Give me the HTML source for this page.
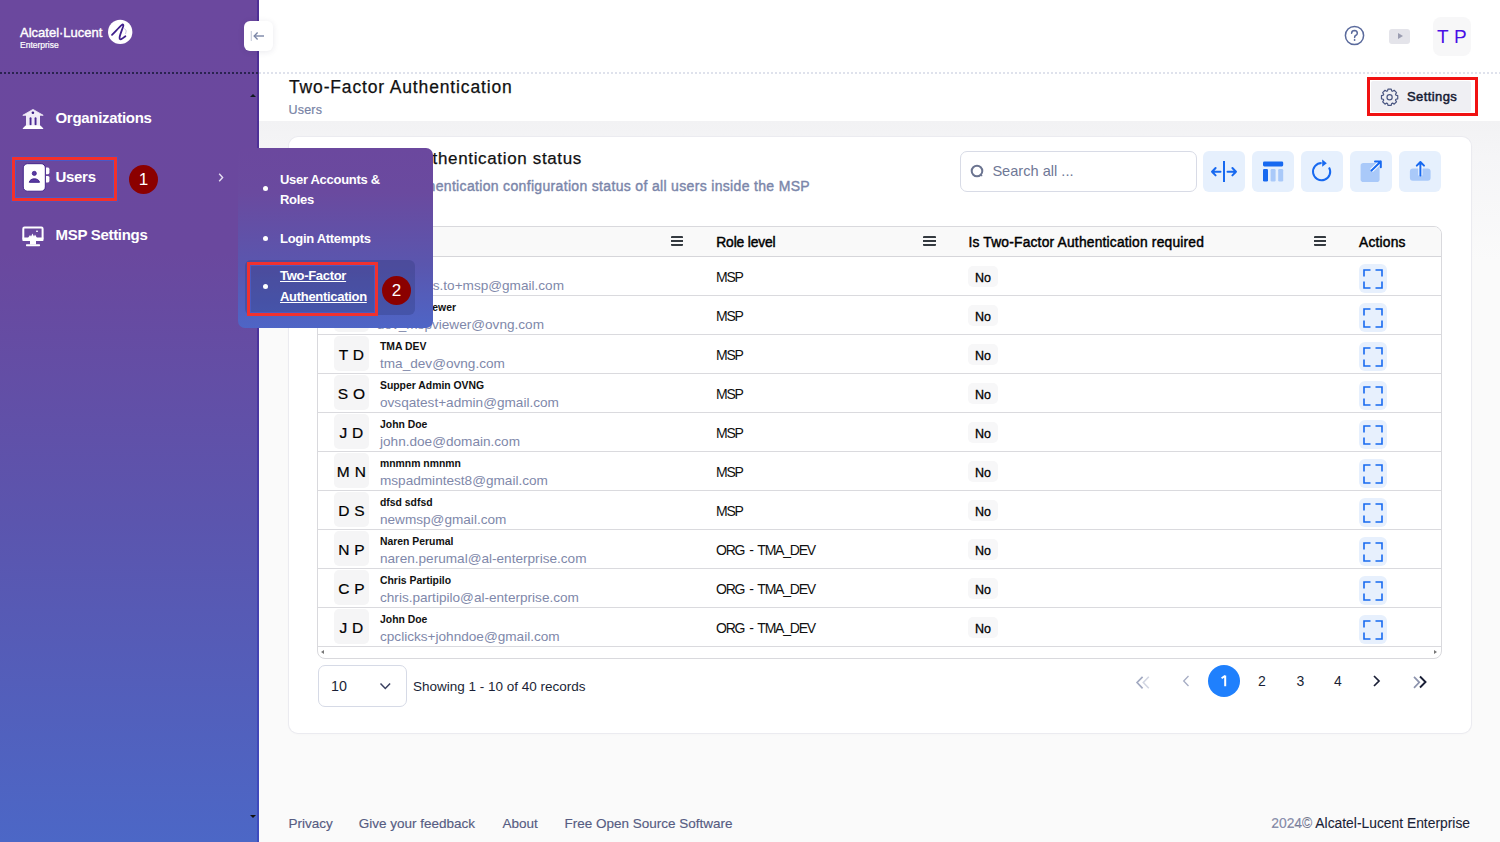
<!DOCTYPE html>
<html><head><meta charset="utf-8">
<style>
*{box-sizing:border-box;margin:0;padding:0}
html,body{width:1500px;height:842px;overflow:hidden}
body{position:relative;background:#fafafa;font-family:"Liberation Sans",sans-serif;color:#1a1f36}
.abs{position:absolute}
.t{position:absolute;white-space:nowrap;line-height:1}
svg{position:absolute;overflow:visible}
#sidebar{left:0;top:0;width:259px;height:842px;background:linear-gradient(180deg,#6b489e 0%,#6a489e 30%,#5b55ae 62%,#4c67c6 100%)}
#topbar{left:259px;top:0;width:1241px;height:73px;background:#fff}
#titlebar{left:259px;top:73px;width:1241px;height:48px;background:#fff}
.dots-light{height:2px;background-image:linear-gradient(90deg,#dfe2ec 50%,transparent 50%);background-size:4px 2px}
.dots-dark{height:2px;background-image:linear-gradient(90deg,#2a2350 50%,transparent 50%);background-size:4px 2px}
#card{left:289px;top:137px;width:1182px;height:596px;background:#fff;border-radius:9px;box-shadow:0 0 0 1px #ebebf0,0 1px 3px rgba(0,0,0,0.03)}
#table{left:317px;top:226px;width:1125px;height:433px;border:1px solid #d9d9dd;border-radius:8px;overflow:hidden;background:#fff}
.thead{position:absolute;left:0;top:0;width:1123px;height:30px;background:#f9f9f9;border-bottom:1px solid #d6d6da}
.th{position:absolute;top:9.2px;font-size:13.8px;font-weight:400;color:#000;line-height:1;white-space:nowrap;letter-spacing:-0.15px;-webkit-text-stroke:0.45px #000}
.hb{position:absolute;top:9px;width:12.5px;height:10px;background:linear-gradient(180deg,#343a40 0,#343a40 2px,transparent 2px,transparent 4px,#343a40 4px,#343a40 6px,transparent 6px,transparent 8px,#343a40 8px,#343a40 10px);border-radius:1px}
.row{position:absolute;left:0;width:1123px;height:39px;border-bottom:1px solid #dadade}
.av{position:absolute;left:16px;top:1px;width:35px;height:35px;background:#f5f5f6;border-radius:5px;font-size:15.5px;color:#000;text-align:center;line-height:38.6px;letter-spacing:0.3px;-webkit-text-stroke:0.2px #000}
.nm{position:absolute;left:62px;top:6.6px;font-size:10.4px;font-weight:700;color:#111;white-space:nowrap;line-height:1}
.em{position:absolute;left:62px;top:21.5px;font-size:13.6px;color:#8088aa;white-space:nowrap;line-height:1}
.role{position:absolute;left:398px;top:13.1px;font-size:14px;letter-spacing:-1.2px;word-spacing:2.2px;color:#111;line-height:1;white-space:nowrap}
.chip{position:absolute;left:650px;top:9px;width:30px;height:20.5px;background:#f7f7f8;border-radius:5px;font-size:12.5px;font-weight:400;-webkit-text-stroke:0.3px #000;color:#000;text-align:center;line-height:24.6px}
.act{position:absolute;left:1041px;top:7px;width:28px;height:29px;background:#e7f0fd;border-radius:6px}
.tbtn{position:absolute;top:151px;width:42px;height:41px;background:#e6f0fd;border-radius:6px}
.pg{position:absolute;top:675px;font-size:14px;color:#1a1f36;line-height:1;white-space:nowrap}
.foot{position:absolute;top:817.3px;font-size:13.5px;color:#565c82;-webkit-text-stroke:0.15px #565c82;line-height:1;white-space:nowrap}
.side{position:absolute;left:55.5px;margin-top:-0.7px;font-size:15px;font-weight:700;color:#fff;letter-spacing:-0.3px;line-height:1;white-space:nowrap}
.sub{position:absolute;left:280px;font-size:13px;font-weight:700;color:#fff;letter-spacing:-0.3px;line-height:1;white-space:nowrap}
.bul{position:absolute;left:262.5px;width:5px;height:5px;border-radius:50%;background:#fff}
.badge{position:absolute;width:29px;height:29px;border-radius:50%;background:#8b0000;color:#fff;font-size:17px;text-align:center;line-height:30px}
</style></head>
<body>
<div id="sidebar" class="abs"></div>
<div class="abs" style="left:257.3px;top:0;width:1.7px;height:842px;background:linear-gradient(180deg,#4f2f95 0%,#4d3199 35%,#3d4cbf 100%)"></div>
<div id="topbar" class="abs"></div>
<div id="titlebar" class="abs"></div>
<div class="abs dots-dark" style="left:0;top:72px;width:259px"></div>
<div class="abs dots-light" style="left:259px;top:72px;width:1241px"></div>

<!-- logo -->
<div class="t" style="left:20px;top:25.6px;font-size:13px;color:#fff;letter-spacing:0px;-webkit-text-stroke:0.4px #fff">Alcatel·Lucent</div>
<div class="t" style="left:20px;top:41.4px;font-size:8.5px;color:#fff;-webkit-text-stroke:0.2px #fff">Enterprise</div>
<svg style="left:107px;top:19px" width="26" height="26" viewBox="0 0 26 26"><circle cx="13.2" cy="12.9" r="12.2" fill="#fff"/><path d="M5 15.9 C9 11.8 12.6 7.8 14.6 6.1 C16.1 4.9 16.7 5.6 16.2 7.3 C15 11 12.9 15.8 12.6 18.3 C12.3 20.6 13.6 20.7 15.2 19.6 L18.4 17.2" fill="none" stroke="#3e1f8c" stroke-width="1.8" stroke-linecap="round" stroke-linejoin="round"/><path d="M17.5 9.5 Q20.5 11.5 18.5 15" fill="none" stroke="#c9bfe3" stroke-width="1"/></svg>

<!-- sidebar scroll arrows -->
<div class="abs" style="left:250px;top:93.5px;width:0;height:0;border-left:3px solid transparent;border-right:3px solid transparent;border-bottom:3px solid #111a22"></div>
<div class="abs" style="left:250px;top:815px;width:0;height:0;border-left:3px solid transparent;border-right:3px solid transparent;border-top:3px solid #111"></div>

<!-- sidebar items -->
<svg style="left:22px;top:109px" width="22" height="21" viewBox="0 0 22 21"><path d="M0.8 6.3 L11 0.4 L21.2 6.3 Z" fill="#f1ecf8" stroke="#f1ecf8" stroke-width="0.8" stroke-linejoin="round"/><circle cx="10.9" cy="3.8" r="1.3" fill="#3a1c86"/><rect x="4" y="6" width="14" height="11" fill="#efe9f7"/><rect x="7.6" y="8.3" width="1.9" height="8" rx="0.9" fill="#4b2a95"/><rect x="12.6" y="8.3" width="1.9" height="8" rx="0.9" fill="#4b2a95"/><path d="M3.6 16.5 L18.4 16.5 L21.2 19.2 L21.2 20 L0.8 20 L0.8 19.2 Z" fill="#fff"/></svg>
<div class="side" style="top:110.6px">Organizations</div>

<svg style="left:23px;top:164px" width="27" height="28" viewBox="0 0 27 28"><rect x="0.3" y="-0.3" width="22" height="27.5" rx="4.2" fill="#fff" stroke="#3a1c86" stroke-width="0.9"/><path d="M23 3.6 h2 q1.4 0 1.4 1.6 v3.4 q0 1.6 -1.4 1.6 h-2 Z" fill="#fff"/><path d="M23 12 h2 q1.4 0 1.4 1.6 v3.2 q0 1.6 -1.4 1.6 h-2 Z" fill="#fff"/><circle cx="11.3" cy="9.4" r="2.1" fill="#5a3aa2" stroke="#3a1c86" stroke-width="0.7"/><path d="M6.3 18.3 C6.9 13.6 15.9 13.6 16.5 18.3 Z" fill="#5a3aa2" stroke="#3a1c86" stroke-width="0.9" stroke-linejoin="round"/></svg>
<div class="side" style="top:169.3px">Users</div>
<div class="abs" style="left:12px;top:157px;width:105px;height:44px;border:3px solid #f3302c;box-shadow:inset 0 0 0 1px #4a58c8,0 0 0 1px rgba(74,88,200,0.5)"></div>
<div class="badge" style="left:129px;top:165px">1</div>
<svg style="left:218px;top:173px" width="6" height="9" viewBox="0 0 6 9"><path d="M1.2 0.8 L4.6 4.5 L1.2 8.2" fill="none" stroke="#e6e0f2" stroke-width="1.4"/></svg>

<svg style="left:22px;top:226px" width="22" height="21" viewBox="0 0 22 21"><rect x="1.3" y="1.6" width="19.3" height="12.3" rx="1.2" fill="none" stroke="#fff" stroke-width="2"/><rect x="0.6" y="11.5" width="20.7" height="3.5" fill="#fff"/><rect x="8" y="14.5" width="6" height="4" fill="#fff"/><rect x="4" y="18.2" width="14" height="2" rx="0.6" fill="#fff"/><path d="M6 12 L8 9 L9 10.5 L10.5 7.5 L12 10.5 L13 8.5 L15 12 Z" fill="#fff"/><rect x="14.2" y="4.6" width="1.6" height="1.4" fill="#fff"/></svg>
<div class="side" style="top:227.7px">MSP Settings</div>

<!-- toggle button -->
<div class="abs" style="left:244px;top:21px;width:29px;height:30px;background:#fff;border-radius:6px;box-shadow:0 1px 6px rgba(40,40,80,0.10)"></div>
<svg style="left:250px;top:29px" width="16" height="14" viewBox="0 0 16 14"><path d="M1.3 2 V12" stroke="#c6cbda" stroke-width="1.1"/><path d="M4.2 7 H14" stroke="#7a86a6" stroke-width="1.4"/><path d="M7.6 3.6 L4.2 7 L7.6 10.4" fill="none" stroke="#7a86a6" stroke-width="1.4"/></svg>

<!-- header right icons -->
<svg style="left:1344px;top:25px" width="21" height="21" viewBox="0 0 21 21"><circle cx="10.5" cy="10.5" r="9.1" fill="none" stroke="#5a6a9c" stroke-width="1.5"/><path d="M7.6 8.2 Q7.8 5.6 10.5 5.6 Q13.3 5.7 13.3 8.2 Q13.3 9.6 11.6 10.5 Q10.6 11.1 10.6 12.5" fill="none" stroke="#5a6a9c" stroke-width="1.5" stroke-linecap="round"/><circle cx="10.6" cy="15" r="0.9" fill="#5a6a9c"/></svg>
<div class="abs" style="left:1389px;top:29px;width:21px;height:15px;background:#e4e4ea;border-radius:3px"></div>
<div class="abs" style="left:1398px;top:32.5px;width:0;height:0;border-top:3.6px solid transparent;border-bottom:3.6px solid transparent;border-left:5.4px solid #9b9db1"></div>
<div class="abs" style="left:1432.5px;top:17px;width:38.5px;height:38.5px;background:#f7f7f8;border-radius:8px"></div>
<div class="t" style="left:1437px;top:27.2px;font-size:19px;color:#4a0fe6;letter-spacing:0.2px">T P</div>

<!-- main title -->
<div class="t" style="left:289px;top:79px;font-size:17.5px;letter-spacing:0.85px;color:#111;-webkit-text-stroke:0.25px #111">Two-Factor Authentication</div>
<div class="t" style="left:288.5px;top:103.6px;font-size:12.5px;color:#7783a5;letter-spacing:0.2px;-webkit-text-stroke:0.2px #7783a5">Users</div>

<!-- settings -->
<div class="abs" style="left:1371px;top:81px;width:100px;height:31px;background:#efeff3;border-radius:2px"></div>
<svg style="left:1380px;top:88px" width="19" height="19" viewBox="0 0 19 19"><path d="M15.86 7.12 L17.73 7.55 L17.73 10.85 L15.86 11.28 L15.50 12.16 L16.52 13.79 L14.19 16.12 L12.56 15.10 L11.68 15.46 L11.25 17.33 L7.95 17.33 L7.52 15.46 L6.64 15.10 L5.01 16.12 L2.68 13.79 L3.70 12.16 L3.34 11.28 L1.47 10.85 L1.47 7.55 L3.34 7.12 L3.70 6.24 L2.68 4.61 L5.01 2.28 L6.64 3.30 L7.52 2.94 L7.95 1.07 L11.25 1.07 L11.68 2.94 L12.56 3.30 L14.19 2.28 L16.52 4.61 L15.50 6.24 Z" fill="none" stroke="#4b5782" stroke-width="1.2" stroke-linejoin="round"/><circle cx="9.6" cy="9.2" r="2.6" fill="none" stroke="#4b5782" stroke-width="1.2"/></svg>
<div class="t" style="left:1407px;top:89.6px;font-size:13px;font-weight:400;letter-spacing:0.4px;color:#161b33;-webkit-text-stroke:0.5px #161b33">Settings</div>
<div class="abs" style="left:1367px;top:77px;width:111px;height:39px;border:3px solid #f01212"></div>

<div class="abs" style="left:259px;top:121px;width:1241px;height:140px;background:linear-gradient(180deg,#f2f2f4 0%,#f5f5f7 25%,#fafafa 100%)"></div>
<div id="card" class="abs"></div>

<!-- card header -->
<div class="t" style="right:918px;top:149.6px;font-size:17px;letter-spacing:0.65px;color:#111;-webkit-text-stroke:0.25px #111">Two-Factor Authentication status</div>
<div class="t" style="right:690px;top:178.9px;font-size:14px;font-weight:400;letter-spacing:0.33px;color:#7b86aa;-webkit-text-stroke:0.4px #7b86aa">Two-Factor Authentication configuration status of all users inside the MSP</div>

<div class="abs" style="left:960px;top:151px;width:237px;height:41px;border:1px solid #d8dbe6;border-radius:7px;background:#fff"></div>
<svg style="left:970px;top:164px" width="15" height="15" viewBox="0 0 15 15"><circle cx="7" cy="7" r="5.3" fill="none" stroke="#6b7490" stroke-width="2"/><path d="M10.8 10.8 L12.2 12.2" stroke="#6b7490" stroke-width="1.2"/></svg>
<div class="t" style="left:992.4px;top:164.2px;font-size:14.6px;color:#6f7896">Search all ...</div>

<div class="tbtn" style="left:1203px"></div>
<svg style="left:1203px;top:151px" width="42" height="41" viewBox="0 0 42 41"><path d="M21 10 V31" stroke="#1769f0" stroke-width="2"/><path d="M9 20.7 H17.5 M12.6 17 L9 20.7 L12.6 24.4" fill="none" stroke="#1769f0" stroke-width="2" stroke-linejoin="round" stroke-linecap="round"/><path d="M24.5 20.7 H33 M29.4 17 L33 20.7 L29.4 24.4" fill="none" stroke="#1769f0" stroke-width="2" stroke-linejoin="round" stroke-linecap="round"/></svg>
<div class="tbtn" style="left:1252px"></div>
<svg style="left:1252px;top:151px" width="42" height="41" viewBox="0 0 42 41"><rect x="11" y="10.4" width="20.2" height="5" rx="1.3" fill="#1769f0"/><rect x="11" y="17.9" width="5" height="12.7" rx="1.3" fill="#1769f0"/><rect x="18.6" y="17.9" width="5" height="12.7" rx="1.3" fill="#a9c9f9"/><rect x="26.2" y="17.9" width="5" height="12.7" rx="1.3" fill="#a9c9f9"/></svg>
<div class="tbtn" style="left:1301px"></div>
<svg style="left:1301px;top:151px" width="42" height="41" viewBox="0 0 42 41"><path d="M20.6 12.1 A8.6 8.6 0 1 0 28.05 16.4" fill="none" stroke="#1769f0" stroke-width="2"/><path d="M21.2 8.6 L25.8 12.2 L21.2 15.8 Z" fill="#1769f0"/></svg>
<div class="tbtn" style="left:1350px"></div>
<svg style="left:1350px;top:151px" width="42" height="41" viewBox="0 0 42 41"><rect x="10.6" y="12" width="19" height="19" rx="2.8" fill="#a9c9f9"/><path d="M21.5 19.5 L30.8 10.5" stroke="#fff" stroke-width="4"/><path d="M21.5 19.5 L30.8 10.5 M25 10.5 H30.8 V16.3" fill="none" stroke="#1769f0" stroke-width="2" stroke-linecap="round" stroke-linejoin="round"/></svg>
<div class="tbtn" style="left:1399px"></div>
<svg style="left:1399px;top:151px" width="42" height="41" viewBox="0 0 42 41"><rect x="10.9" y="17.4" width="20.7" height="12.3" rx="3" fill="#a9c9f9"/><path d="M21.4 11.5 V24.5" stroke="#fff" stroke-width="4"/><path d="M21.4 11 V24.4 M17.8 14.6 L21.4 11 L25 14.6" fill="none" stroke="#1769f0" stroke-width="2" stroke-linecap="round" stroke-linejoin="round"/></svg>

<!-- table -->
<div id="table" class="abs">
 <div class="thead">
  <div class="th" style="left:16px">Name</div>
  <div class="hb" style="left:352.7px"></div>
  <div class="th" style="left:398.3px">Role level</div>
  <div class="hb" style="left:605px"></div>
  <div class="th" style="left:650.4px;letter-spacing:0.2px">Is Two-Factor Authentication required</div>
  <div class="hb" style="left:995.5px"></div>
  <div class="th" style="left:1041px;letter-spacing:0.2px">Actions</div>
 </div>
<div class="row" style="top:30px"><div class="av">T S</div><div class="nm" style="">Test</div><div class="em" style="right:877px;left:auto">testops.to+msp@gmail.com</div><div class="role">MSP</div><div class="chip">No</div><div class="act"><svg width="20" height="20" viewBox="0 0 20 20" style="position:absolute;left:4px;top:5px"><path d="M1 7.5V1H7.5M12.5 1H19V7.5M19 12.5V19H12.5M7.5 19H1V12.5" fill="none" stroke="#1769f0" stroke-width="1.6"/></svg></div></div>
<div class="row" style="top:69px"><div class="av">M V</div><div class="nm" style="right:985px;left:auto">Dev MSP Viewer</div><div class="em" style="right:897px;left:auto">dev_mspviewer@ovng.com</div><div class="role">MSP</div><div class="chip">No</div><div class="act"><svg width="20" height="20" viewBox="0 0 20 20" style="position:absolute;left:4px;top:5px"><path d="M1 7.5V1H7.5M12.5 1H19V7.5M19 12.5V19H12.5M7.5 19H1V12.5" fill="none" stroke="#1769f0" stroke-width="1.6"/></svg></div></div>
<div class="row" style="top:108px"><div class="av">T D</div><div class="nm" style="">TMA DEV</div><div class="em" style="">tma_dev@ovng.com</div><div class="role">MSP</div><div class="chip">No</div><div class="act"><svg width="20" height="20" viewBox="0 0 20 20" style="position:absolute;left:4px;top:5px"><path d="M1 7.5V1H7.5M12.5 1H19V7.5M19 12.5V19H12.5M7.5 19H1V12.5" fill="none" stroke="#1769f0" stroke-width="1.6"/></svg></div></div>
<div class="row" style="top:147px"><div class="av">S O</div><div class="nm" style="">Supper Admin OVNG</div><div class="em" style="">ovsqatest+admin@gmail.com</div><div class="role">MSP</div><div class="chip">No</div><div class="act"><svg width="20" height="20" viewBox="0 0 20 20" style="position:absolute;left:4px;top:5px"><path d="M1 7.5V1H7.5M12.5 1H19V7.5M19 12.5V19H12.5M7.5 19H1V12.5" fill="none" stroke="#1769f0" stroke-width="1.6"/></svg></div></div>
<div class="row" style="top:186px"><div class="av">J D</div><div class="nm" style="">John Doe</div><div class="em" style="">john.doe@domain.com</div><div class="role">MSP</div><div class="chip">No</div><div class="act"><svg width="20" height="20" viewBox="0 0 20 20" style="position:absolute;left:4px;top:5px"><path d="M1 7.5V1H7.5M12.5 1H19V7.5M19 12.5V19H12.5M7.5 19H1V12.5" fill="none" stroke="#1769f0" stroke-width="1.6"/></svg></div></div>
<div class="row" style="top:225px"><div class="av">M N</div><div class="nm" style="">mnmnm nmnmn</div><div class="em" style="">mspadmintest8@gmail.com</div><div class="role">MSP</div><div class="chip">No</div><div class="act"><svg width="20" height="20" viewBox="0 0 20 20" style="position:absolute;left:4px;top:5px"><path d="M1 7.5V1H7.5M12.5 1H19V7.5M19 12.5V19H12.5M7.5 19H1V12.5" fill="none" stroke="#1769f0" stroke-width="1.6"/></svg></div></div>
<div class="row" style="top:264px"><div class="av">D S</div><div class="nm" style="">dfsd sdfsd</div><div class="em" style="">newmsp@gmail.com</div><div class="role">MSP</div><div class="chip">No</div><div class="act"><svg width="20" height="20" viewBox="0 0 20 20" style="position:absolute;left:4px;top:5px"><path d="M1 7.5V1H7.5M12.5 1H19V7.5M19 12.5V19H12.5M7.5 19H1V12.5" fill="none" stroke="#1769f0" stroke-width="1.6"/></svg></div></div>
<div class="row" style="top:303px"><div class="av">N P</div><div class="nm" style="">Naren Perumal</div><div class="em" style="">naren.perumal@al-enterprise.com</div><div class="role">ORG - TMA_DEV</div><div class="chip">No</div><div class="act"><svg width="20" height="20" viewBox="0 0 20 20" style="position:absolute;left:4px;top:5px"><path d="M1 7.5V1H7.5M12.5 1H19V7.5M19 12.5V19H12.5M7.5 19H1V12.5" fill="none" stroke="#1769f0" stroke-width="1.6"/></svg></div></div>
<div class="row" style="top:342px"><div class="av">C P</div><div class="nm" style="">Chris Partipilo</div><div class="em" style="">chris.partipilo@al-enterprise.com</div><div class="role">ORG - TMA_DEV</div><div class="chip">No</div><div class="act"><svg width="20" height="20" viewBox="0 0 20 20" style="position:absolute;left:4px;top:5px"><path d="M1 7.5V1H7.5M12.5 1H19V7.5M19 12.5V19H12.5M7.5 19H1V12.5" fill="none" stroke="#1769f0" stroke-width="1.6"/></svg></div></div>
<div class="row" style="top:381px"><div class="av">J D</div><div class="nm" style="">John Doe</div><div class="em" style="">cpclicks+johndoe@gmail.com</div><div class="role">ORG - TMA_DEV</div><div class="chip">No</div><div class="act"><svg width="20" height="20" viewBox="0 0 20 20" style="position:absolute;left:4px;top:5px"><path d="M1 7.5V1H7.5M12.5 1H19V7.5M19 12.5V19H12.5M7.5 19H1V12.5" fill="none" stroke="#1769f0" stroke-width="1.6"/></svg></div></div>
 <div class="abs" style="left:3px;top:423px;width:0;height:0;border-top:2.5px solid transparent;border-bottom:2.5px solid transparent;border-right:3px solid #777"></div>
 <div class="abs" style="left:1116px;top:423px;width:0;height:0;border-top:2.5px solid transparent;border-bottom:2.5px solid transparent;border-left:3px solid #777"></div>
</div>

<!-- pagination -->
<div class="abs" style="left:317.5px;top:665px;width:89px;height:42px;border:1px solid #d6dae6;border-radius:7px;background:#fff"></div>
<div class="t" style="left:331px;top:678.9px;font-size:14.3px;color:#1a1f36">10</div>
<svg style="left:379px;top:682px" width="13" height="9" viewBox="0 0 13 9"><path d="M1.5 1.5 L6.3 6.5 L11.1 1.5" fill="none" stroke="#3a4060" stroke-width="1.5"/></svg>
<div class="t" style="left:413px;top:679.6px;font-size:13.5px;color:#1a1f36">Showing 1 - 10 of 40 records</div>

<svg style="left:1134px;top:674px" width="18" height="16" viewBox="0 0 18 16"><path d="M14.8 2.8 L9.3 8.5 L14.8 14.3" fill="none" stroke="#d3d7e3" stroke-width="1.6"/><path d="M8.6 2.8 L3.1 8.5 L8.6 14.3" fill="none" stroke="#a3aac2" stroke-width="1.7"/></svg>
<svg style="left:1181px;top:674px" width="10" height="14" viewBox="0 0 10 14"><path d="M7.5 2 L2.7 7 L7.5 12" fill="none" stroke="#a6adc4" stroke-width="1.3"/></svg>
<div class="abs" style="left:1208.4px;top:664.8px;width:32px;height:32px;border-radius:50%;background:#1f80fd"></div>
<svg style="left:1218px;top:674px" width="12" height="14" viewBox="0 0 12 14"><path d="M7.2 1.6 V12.2 M7.2 1.8 L3.6 4.3" fill="none" stroke="#fff" stroke-width="2" stroke-linejoin="round"/></svg>
<div class="t" style="left:1246px;width:32px;text-align:center;top:674.1px;font-size:14px;color:#1a1f36">2</div>
<div class="t" style="left:1284.5px;width:32px;text-align:center;top:674.1px;font-size:14px;color:#1a1f36">3</div>
<div class="t" style="left:1322px;width:32px;text-align:center;top:674.1px;font-size:14px;color:#1a1f36">4</div>
<svg style="left:1371px;top:674px" width="10" height="14" viewBox="0 0 10 14"><path d="M3 2 L8 7 L3 12" fill="none" stroke="#1a1f36" stroke-width="1.7"/></svg>
<svg style="left:1411px;top:674px" width="18" height="16" viewBox="0 0 18 16"><path d="M3 2.8 L8.3 8.3 L3 13.8" fill="none" stroke="#8c93ad" stroke-width="1.7"/><path d="M9 2.5 L14.5 8 L9 13.5" fill="none" stroke="#1a1f36" stroke-width="1.9"/></svg>

<!-- footer -->
<div class="foot" style="left:288.6px">Privacy</div>
<div class="foot" style="left:358.8px">Give your feedback</div>
<div class="foot" style="left:502.4px">About</div>
<div class="foot" style="left:564.4px">Free Open Source Software</div>
<div class="foot" style="right:30px;font-size:13.85px;top:817px;color:#1a1f36;-webkit-text-stroke:0.1px #1a1f36"><span style="color:#8a90b0">2024©</span> Alcatel-Lucent Enterprise</div>

<!-- submenu popup -->
<div class="abs" style="left:238px;top:148px;width:195px;height:180px;border-radius:7px;background:linear-gradient(180deg,#6b489e 0%,#6a4a9f 25%,#5a56ae 65%,#4e65c6 100%)"></div>
<div class="bul" style="top:186.2px"></div>
<div class="sub" style="top:173.4px">User Accounts &amp;</div>
<div class="sub" style="top:193px">Roles</div>
<div class="bul" style="top:236.1px"></div>
<div class="sub" style="top:232.3px">Login Attempts</div>
<div class="abs" style="left:245px;top:260px;width:170px;height:55px;border-radius:6px;background:rgba(40,50,110,0.28)"></div>
<div class="bul" style="top:284.2px"></div>
<div class="sub" style="top:269.4px;text-decoration:underline">Two-Factor</div>
<div class="sub" style="top:290.3px;text-decoration:underline">Authentication</div>
<div class="abs" style="left:247px;top:262px;width:131px;height:54px;border:3px solid #f0312f;box-shadow:inset 0 0 0 1px #4a5ac0"></div>
<div class="badge" style="left:382px;top:276px">2</div>
</body></html>
